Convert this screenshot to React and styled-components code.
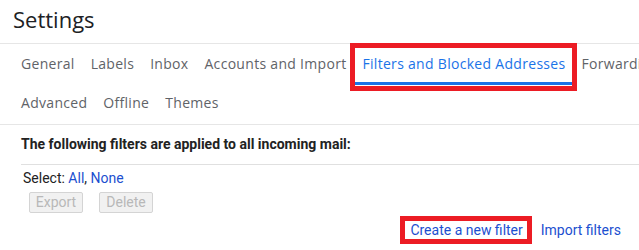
import React from "react";
import styled, { createGlobalStyle } from "styled-components";

const Global = createGlobalStyle`
  html, body { margin: 0; padding: 0; background: #fff; }
  body { overflow: hidden; width: 639px; height: 250px; }
  * { box-sizing: border-box; }
`;

const Page = styled.div`
  width: 639px;
  height: 250px;
  overflow: hidden;
  background: #fff;
`;

const Header = styled.header`
  height: 44px;
  padding: 4px 0 0 13px;
  border-bottom: 1px solid #e6e6e6;
`;

const Title = styled.h1`
  margin: 0;
  font-family: "Open Sans", sans-serif;
  font-weight: 400;
  font-size: 22px;
  line-height: 30px;
  color: #202124;
`;

const Tabs = styled.nav`
  border-bottom: 1px solid #e6e6e6;
  padding-left: 13px;
`;

const TabRow = styled.div`
  display: flex;
  white-space: nowrap;
`;

const Tab = styled.a`
  position: relative;
  flex: none;
  display: block;
  padding: ${(p) => (p.$first ? "10px 8px 8px" : "8px 8px 11px")};
  font-family: "Open Sans", sans-serif;
  font-size: 14px;
  letter-spacing: 0.3px;
  line-height: 20px;
  font-weight: ${(p) => (p.$active ? 500 : 400)};
  color: ${(p) => (p.$active ? "#1a73e8" : "#5f6368")};
  border-bottom: ${(p) => (p.$first ? `3px solid ${p.$active ? "#1a73e8" : "transparent"}` : "none")};
  &::after {
    content: "";
    display: ${(p) => (p.$marked ? "block" : "none")};
    position: absolute;
    left: -4px;
    right: -4px;
    top: -1px;
    bottom: -9px;
    border: 5px solid #ec1c24;
  }
`;

const Content = styled.section`
  padding: 0 18px 0 21px;
  font-family: Roboto, sans-serif;
  font-size: 14px;
  line-height: 20px;
  color: #222;
`;

const Heading = styled.h2`
  margin: 0 -18px 0 0;
  padding: 9px 0 10px;
  font-size: 14px;
  line-height: 20px;
  font-weight: 700;
  color: #222;
  border-bottom: 1px solid #e0e0e0;
`;

const SelectRow = styled.div`
  padding: 3px 0 0 2px;
`;

const Link = styled.a`
  position: relative;
  color: #1c4fd0;
  text-decoration: none;
  &::after {
    content: "";
    display: ${(p) => (p.$marked ? "block" : "none")};
    position: absolute;
    left: -10px;
    right: -9px;
    top: -4px;
    bottom: -4px;
    border: 5px solid #ec1c24;
  }
`;

const Buttons = styled.div`
  display: flex;
  gap: 16px;
  margin: 4px 0 0 8px;
`;

const Button = styled.button`
  height: 21px;
  width: 54px;
  padding: 0;
  font-family: Roboto, sans-serif;
  font-size: 14px;
  line-height: 19px;
  color: #b8b8b8;
  background: #f1f1f1;
  border: 1px solid #d4d4d4;
  border-radius: 2px;
`;

const Actions = styled.div`
  display: flex;
  justify-content: flex-end;
  gap: 18px;
  margin-top: 7px;
`;

export default function App() {
  const row1 = ["General", "Labels", "Inbox", "Accounts and Import", "Filters and Blocked Addresses", "Forwarding and POP/IMAP"];
  const row2 = ["Advanced", "Offline", "Themes"];
  return (
    <Page>
      <Global />
      <Header>
        <Title>Settings</Title>
      </Header>
      <Tabs>
        <TabRow>
          {row1.map((t) => {
            const active = t === "Filters and Blocked Addresses";
            return (
              <Tab key={t} $first $active={active} $marked={active}>
                {t}
              </Tab>
            );
          })}
        </TabRow>
        <TabRow>
          {row2.map((t) => (
            <Tab key={t}>{t}</Tab>
          ))}
        </TabRow>
      </Tabs>
      <Content>
        <Heading>The following filters are applied to all incoming mail:</Heading>
        <SelectRow>
          Select: <Link>All</Link>, <Link>None</Link>
        </SelectRow>
        <Buttons>
          <Button disabled>Export</Button>
          <Button disabled>Delete</Button>
        </Buttons>
        <Actions>
          <Link $marked>Create a new filter</Link>
          <Link>Import filters</Link>
        </Actions>
      </Content>
    </Page>
  );
}
